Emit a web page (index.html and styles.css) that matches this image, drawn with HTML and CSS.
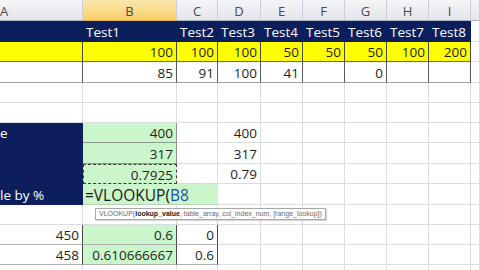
FILE: index.html
```html
<!DOCTYPE html>
<html>
<head>
<meta charset="utf-8">
<link rel="stylesheet" href="styles.css">
</head>
<body>
<div class="sheet">
  <div class="row hdr">
    <span class="ch cha">A</span><span class="ch sel">B</span><span class="ch">C</span><span class="ch">D</span><span class="ch">E</span><span class="ch">F</span><span class="ch">G</span><span class="ch">H</span><span class="ch">I</span><span class="ch"></span>
  </div>
  <div class="row r21">
    <span class="c navy"></span><span class="c navy t">Test1</span><span class="c navy t">Test2</span><span class="c navy t">Test3</span><span class="c navy t">Test4</span><span class="c navy t">Test5</span><span class="c navy t">Test6</span><span class="c navy t">Test7</span><span class="c navy t">Test8</span><span class="c"></span>
  </div>
  <div class="row r20">
    <span class="c yel"></span><span class="c yel n">100</span><span class="c yel n">100</span><span class="c yel n">100</span><span class="c yel n">50</span><span class="c yel n">50</span><span class="c yel n">50</span><span class="c yel n">100</span><span class="c yel n">200</span><span class="c"></span>
  </div>
  <div class="row r21">
    <span class="c tb"></span><span class="c tb n">85</span><span class="c tb n">91</span><span class="c tb n">100</span><span class="c tb n">41</span><span class="c tb"></span><span class="c tb n">0</span><span class="c tb"></span><span class="c tb"></span><span class="c"></span>
  </div>
  <div class="row r20">
    <span class="c"></span><span class="c"></span><span class="c"></span><span class="c"></span><span class="c"></span><span class="c"></span><span class="c"></span><span class="c"></span><span class="c"></span><span class="c"></span>
  </div>
  <div class="row r20">
    <span class="c"></span><span class="c"></span><span class="c"></span><span class="c"></span><span class="c"></span><span class="c"></span><span class="c"></span><span class="c"></span><span class="c"></span><span class="c"></span>
  </div>
  <div class="row r20">
    <span class="c navy lbl">e</span><span class="c grn n">400</span><span class="c"></span><span class="c n">400</span><span class="c"></span><span class="c"></span><span class="c"></span><span class="c"></span><span class="c"></span><span class="c"></span>
  </div>
  <div class="row r21">
    <span class="c navy"></span><span class="c grn n">317</span><span class="c"></span><span class="c n">317</span><span class="c"></span><span class="c"></span><span class="c"></span><span class="c"></span><span class="c"></span><span class="c"></span>
  </div>
  <div class="row r20">
    <span class="c navy"></span><span class="c grn n ants">0.7925</span><span class="c"></span><span class="c n">0.79</span><span class="c"></span><span class="c"></span><span class="c"></span><span class="c"></span><span class="c"></span><span class="c"></span>
  </div>
  <div class="row r21">
    <span class="c navy lbl">le by %</span><span class="c grn edit">=VLOOKUP(<span class="ref">B8</span></span><span class="c"></span><span class="c"></span><span class="c"></span><span class="c"></span><span class="c"></span><span class="c"></span><span class="c"></span>
  </div>
  <div class="row r20">
    <span class="c"></span><span class="c"></span><span class="c"></span><span class="c"></span><span class="c"></span><span class="c"></span><span class="c"></span><span class="c"></span><span class="c"></span><span class="c"></span>
  </div>
  <div class="row r20">
    <span class="c bx n">450</span><span class="c grn bx n">0.6</span><span class="c bx n">0</span><span class="c"></span><span class="c"></span><span class="c"></span><span class="c"></span><span class="c"></span><span class="c"></span><span class="c"></span>
  </div>
  <div class="row r20">
    <span class="c bx n">458</span><span class="c grn bx n">0.610666667</span><span class="c bx n">0.6</span><span class="c"></span><span class="c"></span><span class="c"></span><span class="c"></span><span class="c"></span><span class="c"></span><span class="c"></span>
  </div>
  <div class="row r20">
    <span class="c"></span><span class="c"></span><span class="c"></span><span class="c"></span><span class="c"></span><span class="c"></span><span class="c"></span><span class="c"></span><span class="c"></span><span class="c"></span>
  </div>

  <div class="tip">VLOOKUP(<b>lookup_value</b>, table_array, col_index_num, [range_lookup])</div>
</div>
</body>
</html>
```

FILE: styles.css
```css
html, body {
  margin: 0;
  padding: 0;
  background: #fff;
  overflow: hidden;
}
.sheet {
  position: relative;
  width: 480px;
  height: 270px;
  overflow: hidden;
  font-family: "Open Sans", "Liberation Sans", sans-serif;
  font-size: 13.5px;
  color: #1e1e1e;
}
.row {
  display: grid;
  grid-template-columns: 83px 94px 41px 43px 42px 42px 42px 42px 42px 9px;
}
.hdr { height: 21px; }
.r21 { height: 21px; }
.r20 { height: 20px; }

.ch {
  box-sizing: border-box;
  display: flex;
  align-items: center;
  justify-content: center;
  background: linear-gradient(#f4f5f7, #e2e5ea);
  border-right: 1px solid #c9ced6;
  border-bottom: 1px solid #aab4c2;
  color: #4a4a4a;
  font-size: 13px;
  padding-top: 1px;
}
.cha { justify-content: flex-start; padding-left: 0; }
.ch.sel {
  background: linear-gradient(#fbe7ac, #f7cf6a);
  border-bottom-color: #e0b04a;
}

.c {
  box-sizing: border-box;
  display: flex;
  align-items: center;
  border-right: 1px solid #dadcdf;
  border-bottom: 1px solid #dadcdf;
  white-space: nowrap;
  overflow: hidden;
  padding: 1px 3px 0 3px;
}
.n { justify-content: flex-end; }
.t { color: #fff; padding-left: 3px; }
.navy {
  background: #0c1f5c;
  border-color: #0c1f5c;
  color: #fff;
}
.lbl { padding-left: 0; overflow: visible; }
.yel {
  background: #ffff00;
  border-right-color: #4a4a3a;
  border-bottom-color: #6a6a50;
}
.tb {
  border-right-color: #5a5a5a;
  border-bottom-color: #a0a0a0;
}
.grn {
  background: #cbf6cb;
  border-right-color: #8a9a8a;
  border-bottom-color: #8a9a8a;
}
.ants {
  border: 1px dashed #3a3a3a;
}
.edit {
  grid-column: span 2;
  border-right: 1px solid #cbf6cb;
  border-bottom-color: #b6d6b6;
  padding-left: 2px;
  font-size: 15.5px;
  color: #1a1a1a;
}
.ref { color: #1f4fa6; }
.bx {
  border-right-color: #4a4a4a;
  border-bottom-color: #b0b0b0;
}

.tip {
  position: absolute;
  left: 95px;
  top: 208px;
  height: 12px;
  box-sizing: border-box;
  padding: 0 3px;
  background: #fdfdfd;
  border: 1px solid #a8a8a8;
  box-shadow: 1px 1px 1px rgba(0,0,0,0.15);
  font-family: "Liberation Sans", sans-serif;
  font-size: 7px;
  line-height: 10px;
  color: #6a6a6a;
  white-space: nowrap;
}
.tip b { color: #222; }
```
